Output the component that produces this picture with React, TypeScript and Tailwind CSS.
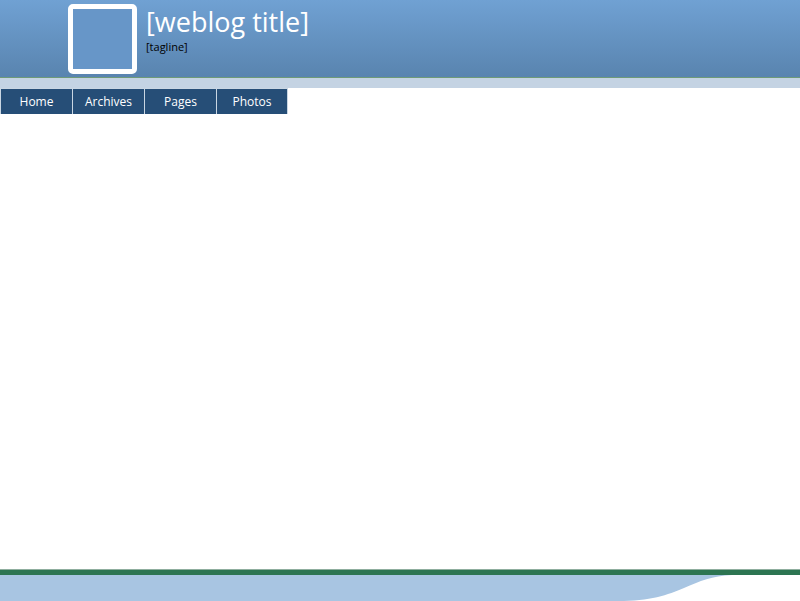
export default function App() {
  const tabs = ["Home", "Archives", "Pages", "Photos"];
  return (
    <div className="flex h-[601px] w-full flex-col overflow-hidden bg-white font-['Open_Sans',sans-serif]">
      {/* header */}
      <header className="h-[78px] shrink-0 border-b border-[#6f9a78] bg-gradient-to-b from-[#70a1d3] to-[#5984af]">
        <div className="flex items-start pl-[68px] pt-[4px]">
          <div className="h-[70px] w-[69px] shrink-0 rounded-[5px] border-[5px] border-white bg-[#6796c8]" />
          <div className="ml-[9px] flex flex-col">
            <h1 className="mt-[1px] text-[27px] leading-[34px] text-white">[weblog title]</h1>
            <p className="mt-[1px] text-[11px] leading-[14px] text-black">[tagline]</p>
          </div>
        </div>
      </header>
      <div className="h-[10px] shrink-0 bg-[#c4d3e3]" />

      {/* nav */}
      <nav className="flex shrink-0">
        {tabs.map((t, i) => (
          <a
            key={t}
            href="#"
            className={`flex h-[26px] w-[72px] items-center justify-center border-t border-l border-[#c9d6e3] bg-[#264e77] text-[12px] text-white ${i === tabs.length - 1 ? "border-r" : ""}`}
          >
            {t}
          </a>
        ))}
      </nav>

      <main className="flex-1" />

      {/* footer */}
      <footer className="shrink-0">
        <div className="h-[6px] border-t border-[#8fae9e] bg-[#2d7552]" />
        <svg width="800" height="26" viewBox="0 0 800 26" preserveAspectRatio="none" className="block">
          <path d="M0 0 H732 C712 1 700 6 684 13 C668 20 650 26 618 26 H0 Z" fill="#a8c5e2" />
        </svg>
      </footer>
    </div>
  );
}
